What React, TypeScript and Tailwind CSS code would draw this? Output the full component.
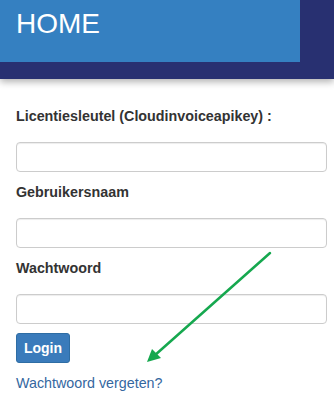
export default function App() {
  return (
    <div
      className="relative min-h-screen bg-white text-[#333]"
      style={{ fontFamily: '"Liberation Sans", Arial, sans-serif' }}
    >
      <div className="h-[79px] bg-[#283071] shadow-[0_3px_7px_rgba(0,0,0,0.3)]">
        <div className="flex h-[62px] w-[300px] items-start bg-[#3580c1] pl-[16px] pt-[8px]">
          <h1 className="text-[28px] leading-[32px] text-white">HOME</h1>
        </div>
      </div>

      <div className="pl-4 pr-[7px] pt-[27px]">
        <label className="mb-4 block text-[14.3px] font-bold leading-5">
          Licentiesleutel (Cloudinvoiceapikey) :
        </label>
        <input
          type="text"
          className="mb-[10px] block h-[30px] w-full rounded-[4px] border border-[#cccccc] bg-white px-2 shadow-[inset_0_1px_1px_rgba(0,0,0,0.075)]"
        />
        <label className="mb-4 block text-[14.3px] font-bold leading-5">
          Gebruikersnaam
        </label>
        <input
          type="text"
          className="mb-[10px] block h-[30px] w-full rounded-[4px] border border-[#cccccc] bg-white px-2 shadow-[inset_0_1px_1px_rgba(0,0,0,0.075)]"
        />
        <label className="mb-4 block text-[14.3px] font-bold leading-5">
          Wachtwoord
        </label>
        <input
          type="password"
          className="mb-[9px] block h-[30px] w-full rounded-[4px] border border-[#cccccc] bg-white px-2 shadow-[inset_0_1px_1px_rgba(0,0,0,0.075)]"
        />
        <button className="block h-[30px] w-[54px] rounded-[3px] border border-[#2e6da4] bg-[#3a7bbb] text-[14px] font-bold text-white">
          Login
        </button>
        <a href="#" className="mt-[10px] block text-[14.3px] leading-5 text-[#35679f]">
          Wachtwoord vergeten?
        </a>
      </div>

      <svg
        className="pointer-events-none absolute left-0 top-0"
        width="334"
        height="409"
        viewBox="0 0 334 409"
      >
        <line x1="270" y1="253" x2="154" y2="356" stroke="#16a84f" strokeWidth="2.5" strokeLinecap="round" />
        <polygon points="147,362 152,349 161,358" fill="#16a84f" />
      </svg>
    </div>
  );
}
